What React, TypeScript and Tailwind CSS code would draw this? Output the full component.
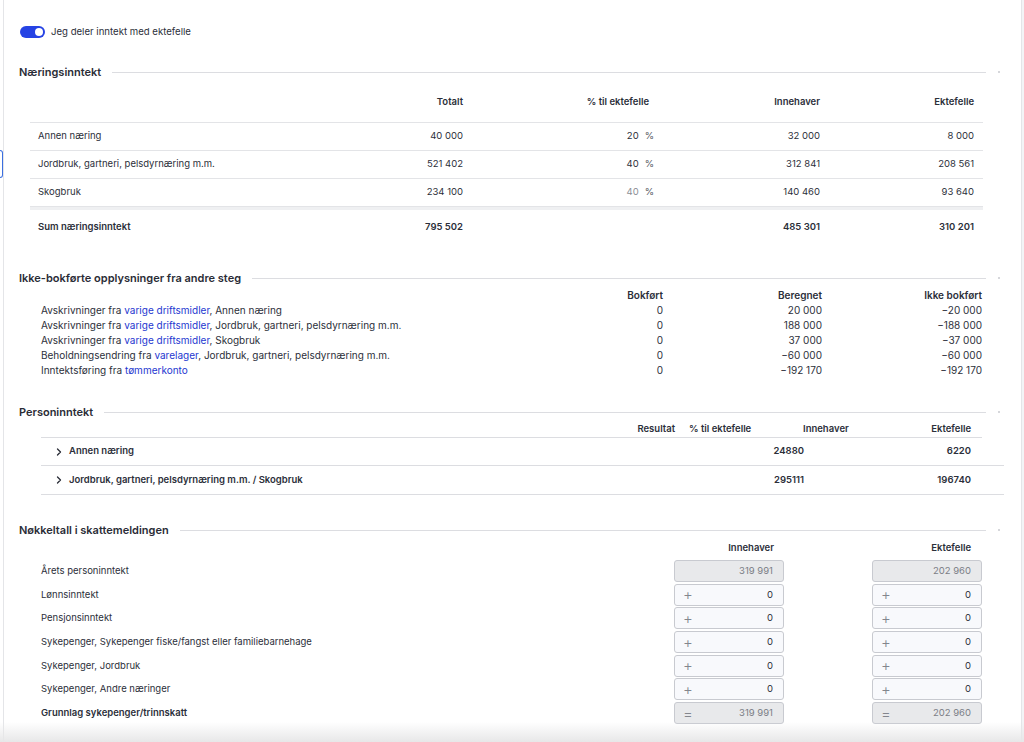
import React, { useState } from 'react';
import { ChevronRight } from 'lucide-react';

type NaeringRow = {
    navn: string;
    totalt: string;
    prosent: string;
    innehaver: string;
    ektefelle: string;
    laast?: boolean;
};

const naeringRows: NaeringRow[] = [
    { navn: 'Annen næring', totalt: '40 000', prosent: '20', innehaver: '32 000', ektefelle: '8 000' },
    { navn: 'Jordbruk, gartneri, pelsdyrnæring m.m.', totalt: '521 402', prosent: '40', innehaver: '312 841', ektefelle: '208 561' },
    { navn: 'Skogbruk', totalt: '234 100', prosent: '40', innehaver: '140 460', ektefelle: '93 640', laast: true },
];

const ikkeBokfort = [
    { pre: 'Avskrivninger fra ', link: 'varige driftsmidler', post: ', Annen næring', bokfort: '0', beregnet: '20 000', ikke: '−20 000' },
    { pre: 'Avskrivninger fra ', link: 'varige driftsmidler', post: ', Jordbruk, gartneri, pelsdyrnæring m.m.', bokfort: '0', beregnet: '188 000', ikke: '−188 000' },
    { pre: 'Avskrivninger fra ', link: 'varige driftsmidler', post: ', Skogbruk', bokfort: '0', beregnet: '37 000', ikke: '−37 000' },
    { pre: 'Beholdningsendring fra ', link: 'varelager', post: ', Jordbruk, gartneri, pelsdyrnæring m.m.', bokfort: '0', beregnet: '−60 000', ikke: '−60 000' },
    { pre: 'Inntektsføring fra ', link: 'tømmerkonto', post: '', bokfort: '0', beregnet: '−192 170', ikke: '−192 170' },
];

const personRows = [
    { navn: 'Annen næring', innehaver: '24880', ektefelle: '6220', h: 'h-[28px]' },
    { navn: 'Jordbruk, gartneri, pelsdyrnæring m.m. / Skogbruk', innehaver: '295111', ektefelle: '196740', h: 'h-[29px]' },
];

type NokkelRow = { navn: string; tegn: '' | '+' | '='; innehaver: string; ektefelle: string; bold?: boolean };

const nokkelRows: NokkelRow[] = [
    { navn: 'Årets personinntekt', tegn: '', innehaver: '319 991', ektefelle: '202 960' },
    { navn: 'Lønnsinntekt', tegn: '+', innehaver: '0', ektefelle: '0' },
    { navn: 'Pensjonsinntekt', tegn: '+', innehaver: '0', ektefelle: '0' },
    { navn: 'Sykepenger, Sykepenger fiske/fangst eller familiebarnehage', tegn: '+', innehaver: '0', ektefelle: '0' },
    { navn: 'Sykepenger, Jordbruk', tegn: '+', innehaver: '0', ektefelle: '0' },
    { navn: 'Sykepenger, Andre næringer', tegn: '+', innehaver: '0', ektefelle: '0' },
    { navn: 'Grunnlag sykepenger/trinnskatt', tegn: '=', innehaver: '319 991', ektefelle: '202 960', bold: true },
];

function Overskrift({ tittel, mt }: { tittel: string; mt: string }) {
    return (
        <div className={`flex items-center h-[20px] pr-[21px] ${mt}`}>
            <h2 className="text-[11px] font-semibold text-[#2a2c36] whitespace-nowrap">{tittel}</h2>
            <div className="flex-1 h-px bg-[#dcdde1] ml-[11px]" />
            <div className="w-[2px] h-[2px] rounded-full bg-[#c9cacf] ml-[12px]" />
        </div>
    );
}

function Felt({ tegn, verdi }: { tegn: string; verdi: string }) {
    const laast = tegn !== '+';
    return (
        <div
            className={`w-[110px] h-[22px] rounded-[3px] border border-[#c8cad0] flex items-center justify-between pl-[8px] pr-[10px] text-[9.5px] ${
                laast ? 'bg-[#e8e9eb] text-[#7b7e86]' : 'bg-[#f8f9fc] text-[#2c2f3a]'
            }`}
        >
            <span className="text-[#83868d] text-[15px] font-light leading-none">{tegn}</span>
            <span>{verdi}</span>
        </div>
    );
}

export default function App() {
    const [deler, setDeler] = useState(true);

    return (
        <div
            className="relative w-[1024px] h-[742px] overflow-hidden bg-[#f3f4f6] flex text-[#2c2f3a]"
            style={{ fontFamily: 'Inter, "Noto Sans", sans-serif' }}
        >
            <div className="w-[3px] bg-white" />
            <div className="w-[1019px] h-full bg-white border-l border-r border-[#e4e5e8] pl-[15px]">
                {/* toggle */}
                <div className="flex items-center h-[24px] mt-[20px] pl-[1px]">
                    <button
                        onClick={() => setDeler(!deler)}
                        className={`w-[25px] h-[12px] rounded-full flex items-center px-[2px] ${deler ? 'bg-[#2643e4] justify-end' : 'bg-gray-300 justify-start'}`}
                    >
                        <span className="w-[8px] h-[8px] rounded-full bg-white" />
                    </button>
                    <span className="ml-[6px] text-[9.6px]">Jeg deler inntekt med ektefelle</span>
                </div>

                {/* Næringsinntekt */}
                <Overskrift tittel="Næringsinntekt" mt="mt-[18px]" />
                <div className="ml-[11px] w-[953px] text-[9.5px]">
                    <div className="grid grid-cols-[270px_172px_190px_167px_154px] h-[41px] items-center border-b border-[#e3e4e7] font-semibold">
                        <span />
                        <span className="text-right pr-[9px]">Totalt</span>
                        <span className="text-right pr-[13px]">% til ektefelle</span>
                        <span className="text-right pr-[9px]">Innehaver</span>
                        <span className="text-right pr-[9px]">Ektefelle</span>
                    </div>
                    {naeringRows.map((r) => (
                        <div
                            key={r.navn}
                            className="grid grid-cols-[270px_172px_190px_167px_154px] h-[28px] items-center border-b border-[#e3e4e7] last:border-b-0"
                        >
                            <span className="pl-[8px]">{r.navn}</span>
                            <span className="text-right pr-[9px]">{r.totalt}</span>
                            <span className="text-right pr-[8px]">
                                <span className={r.laast ? 'text-[#8b8e95]' : ''}>{r.prosent}</span>
                                <span className="ml-[6px] text-[#55585f]">%</span>
                            </span>
                            <span className="text-right pr-[9px]">{r.innehaver}</span>
                            <span className="text-right pr-[9px]">{r.ektefelle}</span>
                        </div>
                    ))}
                    <div className="grid grid-cols-[270px_172px_190px_167px_154px] h-[37px] items-center border-t-[3px] border-[#eff0f2] font-semibold">
                        <span className="pl-[8px]">Sum næringsinntekt</span>
                        <span className="text-right pr-[9px]">795 502</span>
                        <span />
                        <span className="text-right pr-[9px]">485 301</span>
                        <span className="text-right pr-[9px]">310 201</span>
                    </div>
                </div>

                {/* Ikke-bokførte */}
                <Overskrift tittel="Ikke-bokførte opplysninger fra andre steg" mt="mt-[24px]" />
                <div className="ml-[22px] w-[941px] text-[10px]">
                    <div className="grid grid-cols-[462px_160px_159px_160px] h-[15px] items-center font-semibold">
                        <span />
                        <span className="text-right">Bokført</span>
                        <span className="text-right">Beregnet</span>
                        <span className="text-right">Ikke bokført</span>
                    </div>
                    {ikkeBokfort.map((r, i) => (
                        <div key={i} className="grid grid-cols-[462px_160px_159px_160px] h-[15px] items-center">
                            <span className="whitespace-nowrap">
                                {r.pre}
                                <a className="text-[#2437d0] cursor-pointer">{r.link}</a>
                                {r.post}
                            </span>
                            <span className="text-right">{r.bokfort}</span>
                            <span className="text-right">{r.beregnet}</span>
                            <span className="text-right">{r.ikke}</span>
                        </div>
                    ))}
                </div>

                {/* Personinntekt */}
                <Overskrift tittel="Personinntekt" mt="mt-[24px]" />
                <div className="ml-[22px] text-[9.5px]">
                    <div className="w-[941px] grid grid-cols-[634px_128px_97px_71px] h-[16px] items-center border-b border-[#dcdde1] font-semibold">
                        <span className="text-right">Resultat</span>
                        <span className="pl-[14px]">% til ektefelle</span>
                        <span>Innehaver</span>
                        <span className="text-right">Ektefelle</span>
                    </div>
                    {personRows.map((r) => (
                        <div
                            key={r.navn}
                            className={`w-[963px] grid grid-cols-[763px_167px_33px] ${r.h} items-center border-b border-[#dcdde1] font-semibold`}
                        >
                            <span className="flex items-center pl-[12px]">
                                <ChevronRight size={12} strokeWidth={2.6} className="text-[#2a2c36]" />
                                <span className="ml-[4px]">{r.navn}</span>
                                <span className="ml-auto">{r.innehaver}</span>
                            </span>
                            <span className="text-right">{r.ektefelle}</span>
                            <span />
                        </div>
                    ))}
                </div>

                {/* Nøkkeltall */}
                <Overskrift tittel="Nøkkeltall i skattemeldingen" mt="mt-[25px]" />
                <div className="ml-[22px] w-[941px] text-[9.5px]">
                    <div className="grid grid-cols-[633px_110px_88px_110px] h-[20px] pb-[4px] items-center font-semibold">
                        <span />
                        <span className="text-right pr-[10px]">Innehaver</span>
                        <span />
                        <span className="text-right pr-[11px]">Ektefelle</span>
                    </div>
                    {nokkelRows.map((r) => (
                        <div key={r.navn} className="grid grid-cols-[633px_110px_88px_110px] h-[23.7px] items-start">
                            <span className={`leading-[22px] ${r.bold ? 'font-semibold' : ''}`}>{r.navn}</span>
                            <Felt tegn={r.tegn} verdi={r.innehaver} />
                            <span />
                            <Felt tegn={r.tegn} verdi={r.ektefelle} />
                        </div>
                    ))}
                </div>
            </div>

            {/* fokusmarkering og nedre skygge */}
            <div className="absolute left-0 top-[150px] w-[3px] h-[28px] border border-l-0 border-[#3b6fe0] rounded-r-[3px]" />
            <div className="absolute left-0 right-0 bottom-0 h-[20px] bg-gradient-to-b from-white/0 to-[#e7e7e8]" />
        </div>
    );
}
